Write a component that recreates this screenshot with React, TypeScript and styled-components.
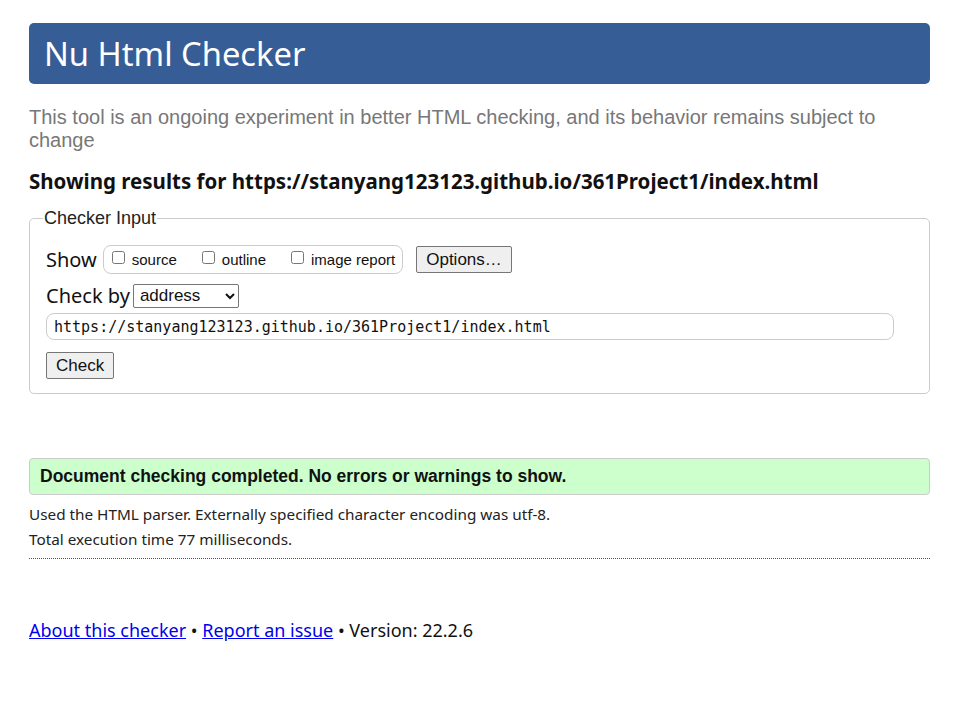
import React from "react";
import styled, { createGlobalStyle } from "styled-components";

const GlobalStyle = createGlobalStyle`
  html, body {
    margin: 0;
    padding: 0;
    background: #fff;
  }
  body {
    font-family: "Noto Sans", "Open Sans", sans-serif;
    color: #111;
  }
`;

const Page = styled.div`
  padding: 23px 27px 40px 29px;
`;

const Header = styled.h1`
  margin: 0;
  background: #365d95;
  color: #fff;
  border-radius: 5px;
  height: 61px;
  padding: 0 15px;
  display: flex;
  align-items: center;
  font-family: "Noto Sans", sans-serif;
  font-weight: 400;
  font-size: 32.7px;
`;

const Intro = styled.p`
  margin: 22px 0 0;
  font-family: "Liberation Sans", Arial, sans-serif;
  font-size: 20px;
  line-height: 23px;
  color: #777;
`;

const Results = styled.h2`
  margin: 16px 0 0;
  font-family: "Noto Sans", sans-serif;
  font-weight: 700;
  font-size: 20.5px;
  line-height: 26px;
  color: #111;
`;

const Fieldset = styled.fieldset`
  margin: 14px 0 0;
  padding: 16px 16px 14px;
  border: 1px solid #ccc;
  border-radius: 5px;
`;

const Legend = styled.legend`
  font-family: "Liberation Sans", Arial, sans-serif;
  font-size: 18px;
  color: #222;
  padding: 0 1px;
  margin-left: -3px;
`;

const Row = styled.div<{ gap?: number; space?: number }>`
  display: flex;
  align-items: center;
  gap: ${p => p.gap ?? 6}px;
  margin-bottom: ${p => p.space ?? 8}px;
`;

const RowLabel = styled.span`
  font-family: "Noto Sans", sans-serif;
  font-size: 20px;
  color: #111;
`;

const CheckGroup = styled.span`
  display: inline-flex;
  align-items: center;
  gap: 25px;
  height: 27px;
  padding: 0 7px 0 8px;
  border: 1px solid #ccc;
  border-radius: 8px;
`;

const CheckItem = styled.label`
  display: inline-flex;
  align-items: center;
  gap: 2px;
  font-family: "Liberation Sans", Arial, sans-serif;
  font-size: 15px;
  color: #111;

  input {
    margin: 0 5px 0 0;
    width: 13px;
    height: 13px;
    position: relative;
    top: -2px;
  }
`;

const Button = styled.button<{ offset?: number }>`
  font-family: "Liberation Sans", Arial, sans-serif;
  font-size: 17px;
  color: #111;
  background: #efefef;
  border: 1px solid #767676;
  border-radius: 2px;
  height: 27px;
  padding: 0 9px;
  margin-left: ${p => p.offset ?? 0}px;
`;

const Select = styled.select`
  font-family: "Liberation Sans", Arial, sans-serif;
  font-size: 17px;
  width: 106px;
  height: 24px;
  border: 1px solid #767676;
  border-radius: 2px;
  background: #fff;
  color: #111;
  padding: 0 2px;
`;

const UrlInput = styled.input`
  display: block;
  box-sizing: border-box;
  width: 848px;
  height: 27px;
  margin: 0 0 12px;
  padding: 0 7px;
  border: 1px solid #ccc;
  border-radius: 8px;
  font-family: "DejaVu Sans Mono", monospace;
  font-size: 15px;
  color: #111;
`;

const Success = styled.div`
  margin-top: 64px;
  height: 37px;
  box-sizing: border-box;
  display: flex;
  align-items: center;
  padding: 0 10px;
  background: #ccffcc;
  border: 1px solid #ccc;
  border-radius: 4px;
  font-family: "Liberation Sans", Arial, sans-serif;
  font-weight: 700;
  font-size: 17.5px;
  color: #111;
`;

const Details = styled.div`
  margin-top: 7px;
  padding-bottom: 6px;
  border-bottom: 1px dotted #555;
`;

const DetailLine = styled.p`
  margin: 0;
  font-family: "Noto Sans", sans-serif;
  font-size: 15.3px;
  line-height: 25px;
  color: #222;
`;

const Footer = styled.p`
  margin: 59px 0 0;
  font-family: "Noto Sans", sans-serif;
  font-size: 18px;
  color: #111;
`;

const FooterLink = styled.a`
  color: #0000ee;
  text-decoration: underline;
`;

export default function App() {
  const url = "https://stanyang123123.github.io/361Project1/index.html";
  return (
    <Page>
      <GlobalStyle />
      <Header>Nu Html Checker</Header>
      <Intro>
        This tool is an ongoing experiment in better HTML checking, and its behavior remains subject to
        change
      </Intro>
      <Results>Showing results for {url}</Results>
      <Fieldset>
        <Legend>Checker Input</Legend>
        <Row>
          <RowLabel>Show</RowLabel>
          <CheckGroup>
            <CheckItem>
              <input type="checkbox" /> source
            </CheckItem>
            <CheckItem>
              <input type="checkbox" /> outline
            </CheckItem>
            <CheckItem>
              <input type="checkbox" /> image report
            </CheckItem>
          </CheckGroup>
          <Button offset={7}>Options…</Button>
        </Row>
        <Row gap={3} space={4}>
          <RowLabel>Check by</RowLabel>
          <Select defaultValue="address">
            <option value="address">address</option>
            <option value="file">file upload</option>
            <option value="text">text input</option>
          </Select>
        </Row>
        <UrlInput type="text" defaultValue={url} />
        <Button>Check</Button>
      </Fieldset>
      <Success>Document checking completed. No errors or warnings to show.</Success>
      <Details>
        <DetailLine>Used the HTML parser. Externally specified character encoding was utf-8.</DetailLine>
        <DetailLine>Total execution time 77 milliseconds.</DetailLine>
      </Details>
      <Footer>
        <FooterLink href="#">About this checker</FooterLink> •{" "}
        <FooterLink href="#">Report an issue</FooterLink> • Version: 22.2.6
      </Footer>
    </Page>
  );
}
